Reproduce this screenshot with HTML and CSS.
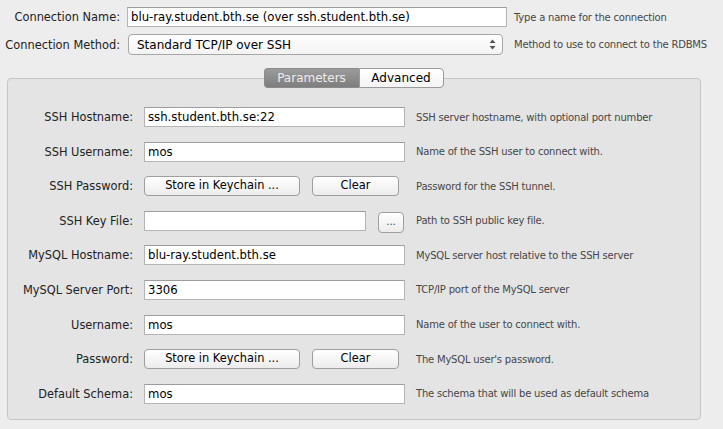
FILE: index.html
```html
<!DOCTYPE html>
<html>
<head>
<meta charset="utf-8">
<link rel="stylesheet" href="styles.css">
</head>
<body>
<div class="top">
  <label class="lbl">Connection Name:</label>
  <div class="field wide">blu-ray.student.bth.se (over ssh.student.bth.se)</div>
  <div class="help">Type a name for the connection</div>
  <label class="lbl">Connection Method:</label>
  <div class="select">
    <span>Standard TCP/IP over SSH</span>
    <svg class="arrows" width="7" height="11" viewBox="0 0 7 11"><path d="M3.5 0.5 L6.5 4 L0.5 4 Z M0.5 7 L6.5 7 L3.5 10.5 Z" fill="#555"/></svg>
  </div>
  <div class="help">Method to use to connect to the RDBMS</div>
</div>

<div class="tabs">
  <div class="tab active">Parameters</div>
  <div class="tab">Advanced</div>
</div>
<div class="panel">
  <div class="grid">
    <label class="lbl">SSH Hostname:</label>
    <div class="field">ssh.student.bth.se:22</div>
    <div class="help">SSH server hostname, with optional port number</div>

    <label class="lbl">SSH Username:</label>
    <div class="field">mos</div>
    <div class="help">Name of the SSH user to connect with.</div>

    <label class="lbl">SSH Password:</label>
    <div class="btns">
      <div class="btn store">Store in Keychain ...</div>
      <div class="btn clear">Clear</div>
    </div>
    <div class="help">Password for the SSH tunnel.</div>

    <label class="lbl">SSH Key File:</label>
    <div class="btns">
      <div class="field key"></div>
      <div class="btn dots">...</div>
    </div>
    <div class="help">Path to SSH public key file.</div>

    <label class="lbl">MySQL Hostname:</label>
    <div class="field">blu-ray.student.bth.se</div>
    <div class="help">MySQL server host relative to the SSH server</div>

    <label class="lbl">MySQL Server Port:</label>
    <div class="field">3306</div>
    <div class="help">TCP/IP port of the MySQL server</div>

    <label class="lbl">Username:</label>
    <div class="field">mos</div>
    <div class="help">Name of the user to connect with.</div>

    <label class="lbl">Password:</label>
    <div class="btns">
      <div class="btn store">Store in Keychain ...</div>
      <div class="btn clear">Clear</div>
    </div>
    <div class="help">The MySQL user's password.</div>

    <label class="lbl">Default Schema:</label>
    <div class="field">mos</div>
    <div class="help">The schema that will be used as default schema</div>
  </div>
</div>
</body>
</html>
```
FILE: styles.css
```css
html, body {
  margin: 0;
  padding: 0;
}
body {
  background: #ededed;
  width: 723px;
  height: 429px;
  overflow: hidden;
  font-family: "DejaVu Sans", "Liberation Sans", sans-serif;
  color: #1e1e1e;
}
.top {
  display: grid;
  grid-template-columns: 120px 380px auto;
  grid-template-rows: 20px 21px;
  column-gap: 7px;
  row-gap: 7px;
  padding-top: 7px;
  align-items: center;
}
.lbl {
  font-size: 11.4px;
  text-align: right;
  white-space: nowrap;
  color: #222;
}
.help {
  font-size: 10px;
  letter-spacing: -0.2px;
  color: #474747;
  white-space: nowrap;
}
.field {
  box-sizing: border-box;
  height: 20px;
  background: #fff;
  border: 1px solid #b4b4b4;
  border-top-color: #9c9c9c;
  font-size: 11.7px;
  line-height: 18px;
  padding-left: 3px;
  color: #000;
  white-space: nowrap;
  overflow: hidden;
}
.select {
  box-sizing: border-box;
  height: 21px;
  width: 375px;
  margin-left: 1px;
  border: 1px solid #a6a6a6;
  border-radius: 4px;
  background: linear-gradient(#ffffff, #f3f3f3);
  display: flex;
  align-items: center;
  justify-content: space-between;
  padding: 0 6px 0 8px;
  font-size: 12px;
  color: #000;
}
.tabs {
  display: flex;
  justify-content: center;
  margin-top: 13px;
  width: 707px;
  position: relative;
  z-index: 1;
  height: 20px;
}
.tab {
  box-sizing: border-box;
  height: 20px;
  font-size: 12px;
  line-height: 18px;
  border: 1px solid #8a8a8a;
  text-align: center;
}
.tab.active {
  width: 95px;
  background: linear-gradient(#9a9a9a, #7e7e7e);
  color: #ececec;
  border-radius: 4px 0 0 4px;
  border-right: none;
}
.tab:not(.active) {
  width: 85px;
  background: linear-gradient(#ffffff, #f4f4f4);
  color: #000;
  border-radius: 0 4px 4px 0;
  border-color: #9a9a9a;
}
.panel {
  box-sizing: border-box;
  margin: -10px 0 0 7px;
  width: 694px;
  height: 342px;
  background: #e4e4e4;
  border: 1px solid #c6c6c6;
  border-radius: 4px;
  padding-top: 28px;
}
.grid {
  display: grid;
  grid-template-columns: 125px 261px auto;
  grid-auto-rows: 20px;
  column-gap: 11px;
  row-gap: 14.6px;
  align-items: center;
}
.btns {
  display: flex;
  gap: 12px;
  height: 20px;
}
.btn {
  box-sizing: border-box;
  height: 20px;
  border: 1px solid #9e9e9e;
  border-radius: 4px;
  background: linear-gradient(#ffffff, #ececec);
  font-size: 11.4px;
  line-height: 17px;
  text-align: center;
  color: #000;
}
.btn.store { width: 156px; }
.btn.clear { width: 87px; }
.field.key { width: 222px; }
.btn.dots {
  width: 26px;
  height: 21px;
  margin-top: 1px;
  font-size: 10px;
  line-height: 17px;
  color: #444;
}
```
